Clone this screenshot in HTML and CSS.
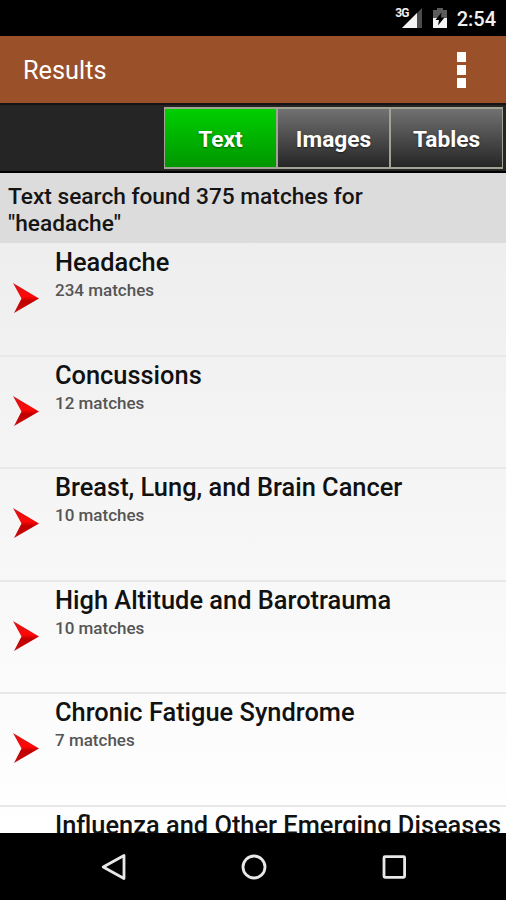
FILE: index.html
```html
<!DOCTYPE html>
<html lang="en">
<head>
    <meta charset="UTF-8">
    <meta name="viewport" content="width=device-width, initial-scale=1.0">
    <title>Results</title>
    <link rel="stylesheet" href="styles.css">
</head>
<body>
    <div class="status-bar">
        <span class="network">3G</span>
        <svg class="signal" width="20" height="20" viewBox="0 0 20 20">
            <path d="M20 0V20H0Z" fill="#4c4c4c"/>
            <path d="M15 5V20H0Z" fill="#f4f4f4"/>
        </svg>
        <svg class="battery" width="14" height="20" viewBox="0 0 14 20">
            <path d="M4 0H10V2H14V10H0V2H4Z" fill="#5c5c5c"/>
            <path d="M0 10H14V20H0Z" fill="#f4f4f4"/>
            <path d="M8.5 4.5L2.5 12H6L5 17.5L11.5 9.5H8Z" fill="#000"/>
        </svg>
        <span class="clock">2:54</span>
    </div>

    <header>
        <h1>Results</h1>
        <button class="menu" aria-label="More options">
            <span></span>
            <span></span>
            <span></span>
        </button>
    </header>

    <nav class="tabs">
        <a class="tab active" href="#">Text</a>
        <a class="tab" href="#">Images</a>
        <a class="tab" href="#">Tables</a>
    </nav>

    <p class="summary">Text search found 375 matches for<br>"headache"</p>

    <svg class="defs" width="0" height="0">
        <linearGradient id="red" x1="0" y1="0" x2="0" y2="1">
            <stop offset="0" stop-color="#d01818"/>
            <stop offset="0.45" stop-color="#ff0808"/>
            <stop offset="0.6" stop-color="#c00000"/>
            <stop offset="1" stop-color="#c81010"/>
        </linearGradient>
        <symbol id="arrow" viewBox="0 0 28 32">
            <path d="M1 1L27 16.5L2 31L9.5 16.5Z" fill="url(#red)"/>
        </symbol>
    </svg>

    <ul class="results">
        <li>
            <svg class="arrow"><use href="#arrow"/></svg>
            <div>
                <h2>Headache</h2>
                <p>234 matches</p>
            </div>
        </li>
        <li>
            <svg class="arrow"><use href="#arrow"/></svg>
            <div>
                <h2>Concussions</h2>
                <p>12 matches</p>
            </div>
        </li>
        <li>
            <svg class="arrow"><use href="#arrow"/></svg>
            <div>
                <h2>Breast, Lung, and Brain Cancer</h2>
                <p>10 matches</p>
            </div>
        </li>
        <li>
            <svg class="arrow"><use href="#arrow"/></svg>
            <div>
                <h2>High Altitude and Barotrauma</h2>
                <p>10 matches</p>
            </div>
        </li>
        <li>
            <svg class="arrow"><use href="#arrow"/></svg>
            <div>
                <h2>Chronic Fatigue Syndrome</h2>
                <p>7 matches</p>
            </div>
        </li>
        <li>
            <div>
                <h2>Influenza and Other Emerging Diseases</h2>
            </div>
        </li>
    </ul>

    <footer>
        <svg width="28" height="30" viewBox="0 0 28 30">
            <path d="M3.2 15L24 3.5V26.5Z" fill="none" stroke="#e8e8e8" stroke-width="2.8" stroke-linejoin="round"/>
        </svg>
        <svg width="28" height="30" viewBox="0 0 28 30">
            <circle cx="14" cy="15" r="11" fill="none" stroke="#e8e8e8" stroke-width="2.8"/>
        </svg>
        <svg width="28" height="30" viewBox="0 0 28 30">
            <rect x="4" y="4.7" width="20.6" height="20.6" rx="1" fill="none" stroke="#e8e8e8" stroke-width="2.8"/>
        </svg>
    </footer>
</body>
</html>
```
FILE: styles.css
```css
body {
    font-family: Roboto, "Liberation Sans", sans-serif;
    margin: 0;
    height: 900px;
    background-color: #000;
    display: flex;
    flex-direction: column;
    overflow: hidden;
}

h1, h2, p, ul {
    margin: 0;
    padding: 0;
}

.status-bar {
    height: 36px;
    flex: none;
    display: flex;
    justify-content: flex-end;
    align-items: flex-start;
    padding-right: 10px;
    box-sizing: border-box;
    color: #f0f0f0;
}

.network {
    font-size: 12px;
    font-weight: 700;
    line-height: 13px;
    letter-spacing: -0.8px;
    margin-top: 7px;
    margin-right: -7px;
    z-index: 1;
}

.signal {
    margin-top: 8px;
}

.battery {
    margin: 8px 10px 0 11px;
}

.clock {
    font-size: 20px;
    font-weight: 500;
    line-height: 24px;
    margin-top: 7px;
}

header {
    height: 67px;
    flex: none;
    box-sizing: border-box;
    display: flex;
    justify-content: space-between;
    align-items: center;
    padding: 1px 35px 0 23px;
    background-color: #9a5028;
}

h1 {
    font-size: 25.3px;
    font-weight: 400;
    color: #fff;
}

.menu {
    display: flex;
    flex-direction: column;
    gap: 3px;
    width: 19px;
    align-items: center;
    background: none;
    border: none;
    padding: 0;
}

.menu span {
    width: 9px;
    height: 10px;
    background-color: #fff;
}

.tabs {
    height: 70px;
    flex: none;
    box-sizing: border-box;
    display: flex;
    justify-content: flex-end;
    padding: 2px 3px 1px 0;
    border-top: 2px solid #141414;
    border-bottom: 2px solid #000;
    background-color: #252525;
}

.tab {
    width: 113px;
    height: 62px;
    box-sizing: border-box;
    border: 2px solid #a3a394;
    border-left-width: 1px;
    border-right-width: 1px;
    background: linear-gradient(#717171, #262626);
    color: #fff;
    font-size: 22.7px;
    font-weight: 700;
    line-height: 61px;
    text-align: center;
    text-decoration: none;
    text-shadow: 0 1px 2px rgba(0, 0, 0, 0.5);
}

.tab.active {
    background: linear-gradient(#00cf00, #009600);
}

.summary {
    height: 70px;
    flex: none;
    box-sizing: border-box;
    padding: 11px 8px 0;
    background-color: #dcdcdc;
    color: #151515;
    font-size: 22.7px;
    font-weight: 500;
    line-height: 26.5px;
}

.defs {
    position: absolute;
}

.results {
    flex: 1;
    min-height: 0;
    overflow: hidden;
    list-style-type: none;
    background: linear-gradient(#eee, #fff);
}

.results li {
    display: flex;
    height: 112.5px;
    box-sizing: border-box;
    padding-left: 55px;
    border-bottom: 2px solid #e8e8e8;
    white-space: nowrap;
}

.results li:first-child {
    height: 113.5px;
    padding-top: 1px;
}

.arrow {
    width: 28px;
    height: 32px;
    flex: none;
    margin: 38px 15px 0 -43px;
}

h2 {
    color: #111;
    font-size: 25.4px;
    font-weight: 500;
    line-height: 30px;
    margin-top: 3px;
}

.results p {
    color: #555;
    font-size: 17px;
    font-weight: 500;
    line-height: 20px;
    margin-top: 3px;
}

footer {
    height: 67px;
    flex: none;
    display: flex;
    justify-content: center;
    align-items: center;
    gap: 112px;
    padding-left: 1px;
}
```
